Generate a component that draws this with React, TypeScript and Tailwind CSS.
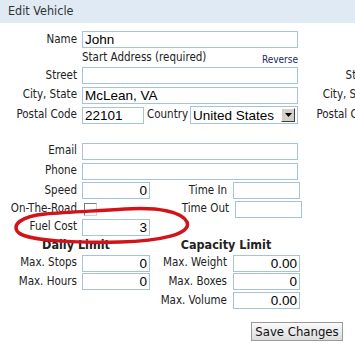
import type { ReactNode } from 'react'

const LABEL_FONT = { fontFamily: "'DejaVu Sans Condensed', 'DejaVu Sans', 'Liberation Sans', sans-serif" }

function Label({ children, w = 'w-[78px]' }: { children?: ReactNode; w?: string }) {
  return (
    <div className={`${w} shrink-0 text-right pr-[1px] text-[11.5px] text-[#222] whitespace-nowrap`} style={LABEL_FONT}>
      {children}
    </div>
  )
}

function Field({ value = '', w, right }: { value?: string; w: string; right?: boolean }) {
  return (
    <div
      className={`${w} h-[17px] shrink-0 border border-[#a7c3dc] bg-white px-[2px] text-[13.5px] leading-[15px] text-black font-['Liberation_Sans',sans-serif] ${
        right ? 'text-right' : 'text-left'
      }`}
    >
      {value}
    </div>
  )
}

function Row({ h, children }: { h: string; children: ReactNode }) {
  return <div className={`${h} flex items-center`}>{children}</div>
}

function EndAddress() {
  // the second address column, mostly outside the window
  return (
    <div className="w-[300px] shrink-0">
      <Row h="h-[19px]">
        <Label />
      </Row>
      <div className="h-[17px] flex items-center">
        <Label />
        <div className="ml-[4px] text-[11.5px] text-[#222]" style={LABEL_FONT}>
          End Address
        </div>
      </div>
      <Row h="h-[19px]">
        <Label>Street</Label>
        <div className="ml-[4px]">
          <Field w="w-[216px]" />
        </div>
      </Row>
      <Row h="h-[20px]">
        <Label>City, State</Label>
        <div className="ml-[4px]">
          <Field w="w-[216px]" />
        </div>
      </Row>
      <Row h="h-[20px]">
        <Label>Postal Code</Label>
        <div className="ml-[4px]">
          <Field w="w-[62px]" />
        </div>
      </Row>
    </div>
  )
}

export default function App() {
  return (
    <div className="w-[355px] h-[344px] overflow-hidden bg-white relative">
      <div className="w-[700px]">
        <div className="h-[23px] bg-[#dfeaf4] flex items-center pl-[8px] text-[12.5px] text-[#333]" style={LABEL_FONT}>
          Edit Vehicle
        </div>

        <div className="flex pt-[7px]">
          <div className="w-[300px] shrink-0">
            <Row h="h-[19px]">
              <Label>Name</Label>
              <div className="ml-[4px]">
                <Field w="w-[216px]" value="John" />
              </div>
            </Row>
            <div className="h-[17px] flex items-center">
              <div className="w-[82px] shrink-0" />
              <div className="w-[216px] flex items-end justify-between">
                <span className="text-[11.5px] text-[#222]" style={LABEL_FONT}>
                  Start Address (required)
                </span>
                <span className="text-[10px] text-[#1c2a5e] mt-[3px]" style={LABEL_FONT}>
                  Reverse
                </span>
              </div>
            </div>
            <Row h="h-[19px]">
              <Label>Street</Label>
              <div className="ml-[4px]">
                <Field w="w-[216px]" />
              </div>
            </Row>
            <Row h="h-[20px]">
              <Label>City, State</Label>
              <div className="ml-[4px]">
                <Field w="w-[216px]" value="McLean, VA" />
              </div>
            </Row>
            <Row h="h-[20px]">
              <Label>Postal Code</Label>
              <div className="ml-[4px]">
                <Field w="w-[62px]" value="22101" />
              </div>
              <div className="ml-[3px] w-[43px] text-[11.5px] text-[#222]" style={LABEL_FONT}>
                Country
              </div>
              <div className="w-[108px] h-[18px] border border-[#a7c3dc] bg-white flex items-center justify-between pl-[2px] pr-[2px]">
                <span className="text-[13.5px] leading-[15px] text-black font-['Liberation_Sans',sans-serif]">
                  United States
                </span>
                <span className="w-[14px] h-[14px] bg-[#d4d0c8] border border-t-white border-l-white border-r-[#404040] border-b-[#404040] flex items-center justify-center">
                  <svg width="7" height="4" viewBox="0 0 7 4">
                    <path d="M0 0h7L3.5 4z" fill="#000" />
                  </svg>
                </span>
              </div>
            </Row>
            <div className="h-[16px]" />
            <Row h="h-[20px]">
              <Label>Email</Label>
              <div className="ml-[4px]">
                <Field w="w-[216px]" />
              </div>
            </Row>
            <Row h="h-[20px]">
              <Label>Phone</Label>
              <div className="ml-[4px]">
                <Field w="w-[216px]" />
              </div>
            </Row>
            <Row h="h-[19px]">
              <Label>Speed</Label>
              <div className="ml-[4px]">
                <Field w="w-[68px]" value="0" right />
              </div>
              <Label>Time In</Label>
              <div className="ml-[5px]">
                <Field w="w-[67px]" />
              </div>
            </Row>
            <Row h="h-[18px]">
              <Label>On-The-Road</Label>
              <div className="ml-[6px] w-[84px] shrink-0 flex">
                <span className="w-[13px] h-[13px] border border-[#7a7a7a] border-b-[#d0d0d0] border-r-[#d0d0d0] bg-white" />
              </div>
              <Label w="w-[62px]">Time Out</Label>
              <div className="ml-[5px]">
                <Field w="w-[67px]" />
              </div>
            </Row>
            <Row h="h-[18px]">
              <Label>Fuel Cost</Label>
              <div className="ml-[4px]">
                <Field w="w-[68px]" value="3" right />
              </div>
            </Row>
            <div className="h-[18px] flex items-center">
              <div className="w-[152px] text-center text-[12.5px] font-bold text-[#222]" style={LABEL_FONT}>
                Daily Limit
              </div>
              <div className="w-[148px] text-center text-[12.5px] font-bold text-[#222]" style={LABEL_FONT}>
                Capacity Limit
              </div>
            </div>
            <Row h="h-[18px]">
              <Label>Max. Stops</Label>
              <div className="ml-[4px]">
                <Field w="w-[68px]" value="0" right />
              </div>
              <Label>Max. Weight</Label>
              <div className="ml-[5px]">
                <Field w="w-[67px]" value="0.00" right />
              </div>
            </Row>
            <Row h="h-[19px]">
              <Label>Max. Hours</Label>
              <div className="ml-[4px]">
                <Field w="w-[68px]" value="0" right />
              </div>
              <Label>Max. Boxes</Label>
              <div className="ml-[5px]">
                <Field w="w-[67px]" value="0" right />
              </div>
            </Row>
            <Row h="h-[19px]">
              <div className="w-[150px] shrink-0" />
              <Label>Max. Volume</Label>
              <div className="ml-[5px]">
                <Field w="w-[67px]" value="0.00" right />
              </div>
            </Row>
          </div>
          <EndAddress />
        </div>

        <div className="w-[355px] flex justify-end pr-[12px] pt-[12px]">
          <button
            className="h-[19px] w-[92px] border border-[#9a9a9a] bg-gradient-to-b from-[#fafafa] to-[#dcdcdc] text-[13px] leading-[15px] text-[#111]"
            style={LABEL_FONT}
          >
            Save Changes
          </button>
        </div>
      </div>

      <svg className="absolute left-0 top-0 pointer-events-none" width="355" height="344" viewBox="0 0 355 344">
        <path
          d="M125 209 C160 207 182 212 187 222 C192 234 160 241 120 242 C78 243 30 241 19 233 C10 225 22 216 45 214 C70 212 95 211 125 209"
          fill="none"
          stroke="#d3131a"
          strokeWidth="3.5"
          strokeLinecap="round"
        />
      </svg>
    </div>
  )
}
